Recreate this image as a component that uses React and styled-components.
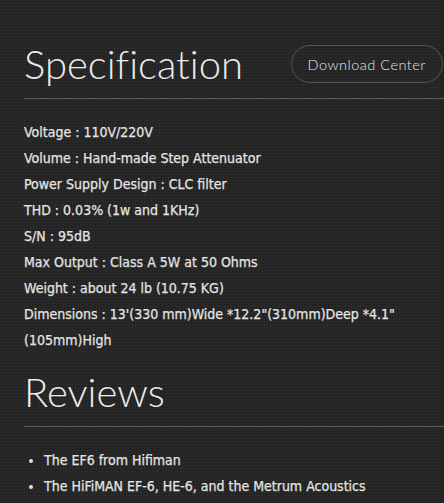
import React from "react";
import styled, { createGlobalStyle } from "styled-components";

const GlobalStyle = createGlobalStyle`
  html, body {
    margin: 0;
    padding: 0;
    background-color: #232323;
    overflow: hidden;
  }
`;

const specs = [
  "Voltage : 110V/220V",
  "Volume : Hand-made Step Attenuator",
  "Power Supply Design : CLC filter",
  "THD : 0.03% (1w and 1KHz)",
  "S/N : 95dB",
  "Max Output : Class A 5W at 50 Ohms",
  "Weight : about 24 lb (10.75 KG)",
  "Dimensions : 13'(330 mm)Wide *12.2\"(310mm)Deep *4.1\" (105mm)High",
];

const reviews = [
  "The EF6 from Hifiman",
  "The HiFiMAN EF-6, HE-6, and the Metrum Acoustics",
];

const App = () => {
  return (
    <>
      <GlobalStyle />
      <Page>
        <Header>
          <Title>Specification</Title>
          <PillButton>Download Center</PillButton>
        </Header>
        <SpecList>
          {specs.map((s) => (
            <SpecLine key={s}>{s}</SpecLine>
          ))}
        </SpecList>
        <Header>
          <Title>Reviews</Title>
        </Header>
        <ReviewList>
          {reviews.map((r) => (
            <li key={r}>{r}</li>
          ))}
        </ReviewList>
      </Page>
    </>
  );
};

const Page = styled.div`
  min-height: 503px;
  padding: 30px 0 0 24px;
  width: 440px;
  box-sizing: border-box;
  background-color: #232323;
  background-image: linear-gradient(rgba(255, 255, 255, 0.025) 1px, transparent 1px),
    linear-gradient(90deg, rgba(255, 255, 255, 0.025) 1px, transparent 1px);
  background-size: 3px 3px;
  color: #e4e4e4;
`;

const Header = styled.div`
  display: flex;
  align-items: center;
  justify-content: space-between;
  border-bottom: 1px solid #5e5e5e;
  height: 68px;
  margin-right: -20px;
`;

const Title = styled.h1`
  margin: 0;
  font-family: "Lato", sans-serif;
  font-weight: 300;
  font-size: 40px;
  font-variant-ligatures: none;
  color: #ececec;
  line-height: 1;
`;

const PillButton = styled.button`
  height: 38px;
  padding: 0 16px;
  margin-right: 17px;
  border: 1px solid #555;
  border-radius: 19px;
  background: transparent;
  color: #e6e6e6;
  font-family: "Lato", sans-serif;
  font-weight: 300;
  font-size: 14.5px;
  letter-spacing: 0.5px;
`;

const SpecList = styled.div`
  padding: 20px 0 5px;
  width: 410px;
`;

const SpecLine = styled.p`
  margin: 0;
  font-family: "DejaVu Sans Condensed", "DejaVu Sans", sans-serif;
  font-size: 14px;
  line-height: 26px;
  color: #e4e4e4;
  -webkit-text-stroke: 0.25px #e4e4e4;
`;

const ReviewList = styled.ul`
  margin: 0;
  padding: 20px 0 0 20px;
  font-family: "DejaVu Sans Condensed", "DejaVu Sans", sans-serif;
  font-size: 14px;
  line-height: 26px;
  color: #e4e4e4;
  -webkit-text-stroke: 0.25px #e4e4e4;
`;

export default App;
